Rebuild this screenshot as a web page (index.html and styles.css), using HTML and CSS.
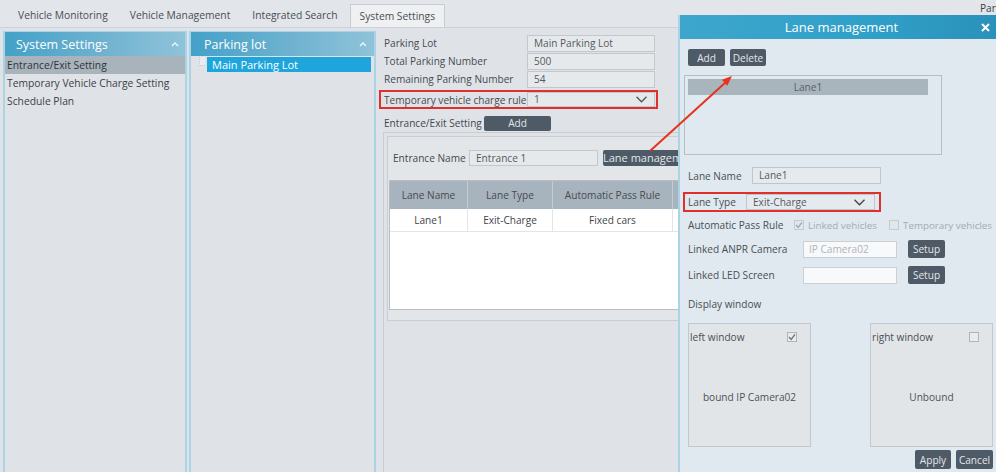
FILE: index.html
```html
<!DOCTYPE html>
<html>
<head>
<meta charset="utf-8">
<title>System Settings</title>
<link rel="stylesheet" href="styles.css">
</head>
<body>
<div class="app">
  <div class="tabbar">
    <div class="tab">Vehicle Monitoring</div>
    <div class="tab">Vehicle Management</div>
    <div class="tab">Integrated Search</div>
    <div class="tab active">System Settings</div>
    <div class="tab-extra">Parking</div>
  </div>

  <div class="main">
    <div class="panel nav">
      <div class="panel-head"><span>System Settings</span><svg class="caret" width="8" height="6" viewBox="0 0 8 6"><polyline points="1,5 4,2 7,5" fill="none" stroke="#eef7fb" stroke-width="1.3"/></svg></div>
      <div class="nav-item sel">Entrance/Exit Setting</div>
      <div class="nav-item">Temporary Vehicle Charge Setting</div>
      <div class="nav-item">Schedule Plan</div>
    </div>

    <div class="panel lots">
      <div class="panel-head"><span>Parking lot</span><svg class="caret" width="8" height="6" viewBox="0 0 8 6"><polyline points="1,5 4,2 7,5" fill="none" stroke="#eef7fb" stroke-width="1.3"/></svg></div>
      <div class="tree-row"><span class="tree-line"></span><span class="lot-item">Main Parking Lot</span></div>
    </div>

    <div class="content">
      <div class="field-row"><label>Parking Lot</label><div class="input">Main Parking Lot</div></div>
      <div class="field-row"><label>Total Parking Number</label><div class="input">500</div></div>
      <div class="field-row"><label>Remaining Parking Number</label><div class="input">54</div></div>
      <div class="field-row hl"><label>Temporary vehicle charge rule</label><div class="input select"><span>1</span><svg width="11" height="7" viewBox="0 0 11 7"><polyline points="0.5,0.8 5.5,5.8 10.5,0.8" fill="none" stroke="#555" stroke-width="1.3"/></svg></div></div>
      <div class="ee-row"><span class="ee-label">Entrance/Exit Setting</span><button class="btn ee-add">Add</button></div>
      <div class="ee-frame">
        <div class="ee-card">
          <div class="ent-row"><label>Entrance Name</label><div class="input ent-input">Entrance 1</div><button class="btn lane-btn">Lane management</button></div>
          <div class="table">
            <div class="thead">
              <div class="cell">Lane Name</div>
              <div class="cell">Lane Type</div>
              <div class="cell">Automatic Pass Rule</div>
              <div class="cell">Linked ANPR Camera</div>
            </div>
            <div class="trow">
              <div class="cell">Lane1</div>
              <div class="cell">Exit-Charge</div>
              <div class="cell">Fixed cars</div>
              <div class="cell">IP Camera02</div>
            </div>
          </div>
        </div>
      </div>
    </div>
  </div>

  <div class="modal">
    <div class="modal-head">
      <span class="modal-title">Lane management</span>
      <svg class="close" width="9" height="9" viewBox="0 0 9 9"><path d="M1 1L8 8M8 1L1 8" stroke="#fff" stroke-width="2"/></svg>
    </div>
    <div class="modal-body">
      <div class="btn-row">
        <button class="btn b-add">Add</button>
        <button class="btn b-del">Delete</button>
      </div>
      <div class="lane-list">
        <div class="lane-item">Lane1</div>
      </div>
      <div class="m-row"><label class="w64">Lane Name</label><div class="input m-input">Lane1</div></div>
      <div class="m-row hl2"><label class="w58">Lane Type</label><div class="input select m-input"><span>Exit-Charge</span><svg width="11" height="7" viewBox="0 0 11 7"><polyline points="0.5,0.8 5.5,5.8 10.5,0.8" fill="none" stroke="#444" stroke-width="1.3"/></svg></div></div>
      <div class="m-row pass">
        <label class="w106">Automatic Pass Rule</label>
        <span class="cb-group g1"><span class="cb dis on"><svg width="8" height="8" viewBox="0 0 8 8"><polyline points="1,4 3.2,6.3 7,1.3" fill="none" stroke="#a4aaaf" stroke-width="1.4"/></svg></span><span class="dim">Linked vehicles</span></span>
        <span class="cb-group"><span class="cb dis"></span><span class="dim">Temporary vehicles</span></span>
      </div>
      <div class="m-row tall anpr"><label class="w115">Linked ANPR Camera</label><div class="input white-input ph">IP Camera02</div><button class="btn setup">Setup</button></div>
      <div class="m-row tall led"><label class="w115">Linked LED Screen</label><div class="input white-input"></div><button class="btn setup">Setup</button></div>
      <div class="m-row disp"><label>Display window</label></div>
      <div class="windows">
        <div class="win">
          <div class="win-top"><span>left window</span><span class="cb on"><svg width="8" height="8" viewBox="0 0 8 8"><polyline points="1,4 3.2,6.3 7,1.3" fill="none" stroke="#6f767c" stroke-width="1.4"/></svg></span></div>
          <div class="win-body">bound IP Camera02</div>
        </div>
        <div class="win">
          <div class="win-top"><span>right window</span><span class="cb"></span></div>
          <div class="win-body">Unbound</div>
        </div>
      </div>
      <div class="foot">
        <button class="btn apply">Apply</button>
        <button class="btn cancel">Cancel</button>
      </div>
    </div>
  </div>

  <svg class="arrow" width="996" height="472" viewBox="0 0 996 472">
    <line x1="650" y1="151" x2="726" y2="82" stroke="#e6321e" stroke-width="2"/>
    <polygon points="732,76 727.3,85.7 721.9,79.7" fill="#e6321e"/>
  </svg>
</div>
</body>
</html>
```

FILE: styles.css
```css
* { box-sizing: border-box; margin: 0; padding: 0; }
html, body { width: 996px; height: 472px; overflow: hidden; }
body {
  font-family: "Open Sans", "Noto Sans", sans-serif;
  font-size: 10.1px;
  color: #43484d;
  background: #dfe3e8;
}
button { font-family: inherit; font-size: inherit; cursor: default; }

.app {
  position: relative;
  width: 996px;
  height: 472px;
  overflow: hidden;
  display: flex;
  flex-direction: column;
}

/* tabs */
.tabbar {
  flex: none;
  height: 28px;
  display: flex;
  align-items: flex-end;
  gap: 2px;
  padding-left: 8px;
  background: #e2e5e9;
  border-bottom: 1px solid #cdd1d5;
}
.tab {
  height: 23px;
  padding: 0 10px;
  line-height: 22px;
  color: #4a4f54;
  white-space: nowrap;
  font-size: 10.3px;
}
.tab.active {
  background: #eef0f2;
  border: 1px solid #c9cdd1;
  border-bottom: none;
  padding: 0 9px;
}
.tab-extra {
  margin-left: auto;
  align-self: flex-start;
  width: 16px;
  overflow: hidden;
  white-space: nowrap;
  padding-top: 1px;
  line-height: 14px;
  color: #3a3f44;
}

/* main */
.main {
  flex: 1;
  min-height: 0;
  display: flex;
  gap: 2px;
  padding: 3px 0 0 3px;
}
.panel {
  flex: none;
  display: flex;
  flex-direction: column;
  border: 2px solid #a8d4e6;
  border-top-width: 1px;
  border-bottom: none;
  background: #dfe3e8;
}
.nav { width: 184px; }
.lots { width: 187px; }
.panel-head {
  height: 24px;
  display: flex;
  align-items: center;
  justify-content: space-between;
  background: linear-gradient(90deg, #44a1c8 0%, #6fb2d0 55%, #8fc3d9 100%);
  color: #fff;
  font-size: 12.5px;
  padding: 0 6px 0 11px;
}
.lots .panel-head { padding-left: 13px; padding-right: 7px; }
.nav-item {
  height: 18px;
  line-height: 18px;
  padding-left: 2px;
  color: #3c4146;
  white-space: nowrap;
  font-size: 10.3px;
}
.nav-item.sel { background: #a9b3bc; color: #2e3338; }

.tree-row {
  display: flex;
  align-items: flex-start;
  padding: 1px 3px 0 8px;
  gap: 2px;
}
.tree-line {
  width: 6px;
  height: 9px;
  border-left: 1px dotted #c4c8cc;
  border-bottom: 1px dotted #c4c8cc;
  background: #e9ecef;
}
.lot-item {
  flex: 1;
  height: 15px;
  line-height: 15px;
  background: #1ea5dc;
  color: #fff;
  padding-left: 5px;
  font-size: 11px;
}

/* content */
.content {
  flex: 1;
  min-width: 0;
  display: flex;
  flex-direction: column;
  padding: 3px 0 0 1px;
  overflow: hidden;
}
.field-row {
  width: 279px;
  height: 18px;
  display: flex;
  align-items: center;
  border-left: 2px solid transparent;
  border-right: 2px solid transparent;
  padding: 0 1px 0 3px;
  flex: none;
}
.field-row label { width: 143px; flex: none; white-space: nowrap; color: #464b50; }
.input {
  height: 17px;
  background: #e6e9ec;
  border: 1px solid #c4c8cc;
  padding: 0 6px;
  line-height: 15px;
  color: #555a5f;
  white-space: nowrap;
  overflow: hidden;
}
.field-row .input { flex: 1; }
.field-row.hl {
  height: 19px;
  margin-top: 2px;
  border: 2px solid #e0302b;
}
.field-row.hl .input { height: 15px; line-height: 13px; }
.select {
  display: flex;
  align-items: center;
  justify-content: space-between;
  padding-right: 7px;
}

.ee-row {
  flex: none;
  height: 18px;
  margin-top: 5px;
  display: flex;
  align-items: center;
  padding-left: 5px;
}
.ee-label { width: 100px; white-space: nowrap; }
.btn {
  border: none;
  border-radius: 2px;
  background: #4e5a66;
  color: #e3e7eb;
  white-space: nowrap;
  overflow: hidden;
}
.ee-add { width: 67px; height: 15px; line-height: 15px; }

.ee-frame {
  flex: 1;
  margin-left: 4px;
  border-top: 1px solid #c8cdd2;
  border-left: 1px solid #c8cdd2;
  padding: 3px 0 0 3px;
}
.ee-card {
  width: 590px;
  height: 185px;
  background: #e3e6e9;
  border: 1px solid #c9ced3;
  padding: 13px 0 0 1px;
}
.ent-row {
  height: 16px;
  display: flex;
  align-items: center;
  padding-left: 4px;
}
.ent-row label { width: 76px; flex: none; white-space: nowrap; }
.ent-input { width: 129px; height: 16px; line-height: 14px; }
.lane-btn { margin-left: 5px; width: 96px; height: 16px; line-height: 16px; font-size: 11px; }

.table {
  margin-top: 14px;
  width: 586px;
  height: 130px;
  border: 1px solid #b8bec4;
  background: #fff;
}
.thead, .trow {
  display: grid;
  grid-template-columns: 78px 85px 120px 1fr;
}
.thead {
  height: 28px;
  background: #a7b3bd;
  color: #474c51;
}
.thead .cell { border-right: 1px solid #c3ccd3; }
.trow {
  height: 23px;
  border-bottom: 1px solid #e2e4e6;
  color: #3f4449;
}
.trow .cell { border-right: 1px solid #e2e4e6; }
.cell {
  display: flex;
  align-items: center;
  justify-content: center;
  white-space: nowrap;
}

/* modal */
.modal {
  position: absolute;
  left: 678px;
  top: 15px;
  bottom: 0;
  width: 318px;
  display: flex;
  flex-direction: column;
  background: #dfe9ef;
  border-left: 2px solid #a9d4e6;
}
.modal-head {
  flex: none;
  height: 24px;
  display: flex;
  align-items: center;
  background: linear-gradient(90deg, #3ea6cc 0%, #30a0c8 60%, #2a91ba 100%);
  color: #fff;
}
.modal-title {
  flex: 1;
  text-align: center;
  padding-left: 22px;
  font-size: 13px;
}
.close { margin-right: 6px; flex: none; }

.modal-body {
  flex: 1;
  display: flex;
  flex-direction: column;
  padding: 10px 3px 0 8px;
  color: #4a4f54;
}
.btn-row { display: flex; gap: 5px; height: 17px; flex: none; }
.b-add { width: 37px; height: 17px; }
.b-del { width: 36px; height: 17px; }

.lane-list {
  flex: none;
  margin: 9px 0 0 -4px;
  width: 258px;
  height: 80px;
  border: 1px solid #b7bec4;
  padding: 3px 0 0 3px;
}
.lane-item {
  width: 240px;
  height: 16px;
  line-height: 16px;
  background: #a9b5bd;
  color: #5a6066;
  text-align: center;
}

.m-row {
  flex: none;
  display: flex;
  align-items: center;
  height: 17px;
  margin-top: 12px;
  white-space: nowrap;
}
.m-row label { flex: none; }
.w64 { width: 64px; }
.w58 { width: 58px; }
.w106 { width: 106px; }
.w115 { width: 115px; }
.m-input { width: 129px; flex: none; background: #e4eaee; border-color: #c0c6cb; }
.m-row.hl2 {
  margin: 8px 0 0 -5px;
  width: 198px;
  height: 20px;
  border: 2px solid #e0302b;
  padding: 0 3px;
}
.hl2 .m-input { height: 16px; line-height: 14px; padding-right: 9px; }

.pass { margin-top: 5px; height: 16px; }
.cb-group { flex: none; display: flex; align-items: center; gap: 4px; }
.g1 { width: 95px; }
.dim { color: #a6abb0; font-size: 9.8px; }
.cb {
  width: 10px;
  height: 10px;
  flex: none;
  border: 1px solid #b0b5ba;
  background: #e9ecee;
  display: flex;
  align-items: center;
  justify-content: center;
}
.cb.dis { border-color: #c6cbcf; background: #e2e6e9; }

.m-row.tall { height: 18px; }
.anpr { margin-top: 7px; }
.led { margin-top: 8px; }
.white-input {
  width: 94px;
  flex: none;
  height: 17px;
  background: #f8f9fa;
  border-color: #cbd0d4;
  padding-left: 5px;
}
.ph { color: #b0b4b8; }
.setup { margin-left: 11px; width: 37px; height: 18px; flex: none; }
.disp { margin-top: 12px; height: 16px; }

.windows {
  flex: none;
  display: flex;
  gap: 59px;
  margin-top: 11px;
}
.win {
  width: 123px;
  height: 124px;
  display: flex;
  flex-direction: column;
  background: #e2e5e8;
  border: 1px solid #c2c8cd;
}
.win-top {
  height: 26px;
  display: flex;
  align-items: center;
  justify-content: space-between;
  padding: 0 13px 0 1px;
}
.win-body {
  flex: 1;
  display: flex;
  align-items: center;
  justify-content: center;
  padding-bottom: 2px;
  color: #4d5257;
}

.foot {
  flex: none;
  display: flex;
  justify-content: flex-end;
  gap: 5px;
  margin-top: 3px;
}
.apply { width: 36px; height: 19px; }
.cancel { width: 37px; height: 19px; }

.arrow {
  position: absolute;
  left: 0;
  top: 0;
  pointer-events: none;
}
```
